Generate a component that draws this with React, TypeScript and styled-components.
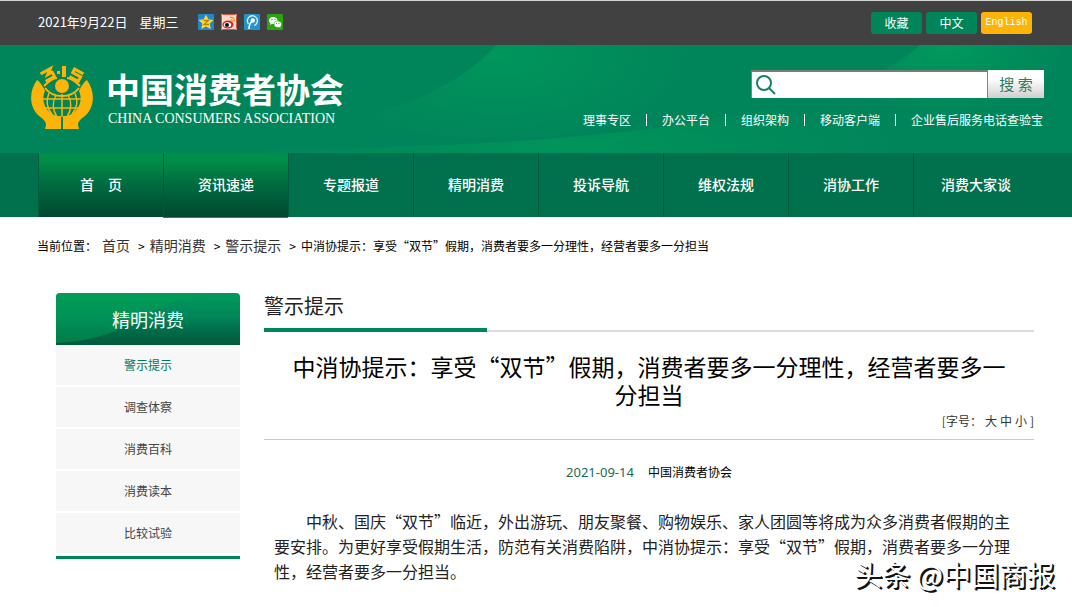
import React from "react";
import styled, { createGlobalStyle, css } from "styled-components";

const GlobalStyle = createGlobalStyle`
  *, *::before, *::after { box-sizing: border-box; }
  body {
    margin: 0;
    background: #fff;
    color: #000;
    font-family: "Noto Sans CJK SC", sans-serif;
    font-size: 12px;
  }
  a { color: inherit; text-decoration: none; }
  ul, ol, h1, h2, p { margin: 0; padding: 0; list-style: none; font-weight: 400; }
`;

const Page = styled.div`
  position: relative;
  overflow: hidden;
  padding-bottom: 20px;
`;

const TopBar = styled.div`
  display: flex;
  align-items: center;
  justify-content: space-between;
  height: 45px;
  padding: 0 40px 0 38px;
  background: #414141;
  border-top: 1px solid #d0d4d0;
  color: #fff;
`;

const DateLine = styled.div`
  display: flex;
  align-items: center;
  gap: 12px;
  padding-bottom: 2px;
  font-size: 13px;
  line-height: 20px;
`;

const Shares = styled.div`
  display: flex;
  gap: 7px;
  padding-left: 7px;
`;

const ShareLink = styled.a`
  display: block;
  height: 16px;
  svg { display: block; }
`;

const TopButtons = styled.div`
  display: flex;
  gap: 4px;
`;

const TopButton = styled.button<{ $accent?: boolean }>`
  width: 51px;
  height: 22px;
  padding: 0;
  border: 0;
  border-radius: 3px;
  background: ${(p) => (p.$accent ? "#fdb408" : "#00855a")};
  color: #fff;
  font-family: ${(p) =>
    p.$accent ? `"Liberation Mono", monospace` : `"Noto Sans CJK SC", sans-serif`};
  font-size: ${(p) => (p.$accent ? "10px" : "12px")};
  line-height: 20px;
`;

const Header = styled.header`
  position: relative;
  display: flex;
  justify-content: space-between;
  height: 108px;
  padding: 20px 28px 0 30px;
  background: #00855a;
`;

const HeaderArt = styled.svg`
  position: absolute;
  inset: 0;
  width: 100%;
  height: 100%;
`;

const Brand = styled.a`
  position: relative;
  display: flex;
  gap: 12px;
  color: #fff;
`;

const BrandText = styled.div`
  display: flex;
  flex-direction: column;
  gap: 3px;
  padding-top: 6px;
`;

const BrandName = styled.div`
  font-size: 34px;
  font-weight: 700;
  line-height: 36px;
`;

const BrandLatin = styled.div`
  padding-left: 2px;
  font-family: "Liberation Serif", serif;
  font-size: 14px;
  line-height: 18px;
`;

const HeaderSide = styled.div`
  position: relative;
  display: flex;
  flex-direction: column;
  align-items: flex-end;
  gap: 12px;
  padding-top: 5px;
`;

const SearchForm = styled.form`
  display: flex;
  width: 293px;
  height: 28px;
`;

const SearchField = styled.label`
  display: flex;
  flex: 1;
  align-items: center;
  padding-left: 3px;
  background: #fff;
  border: 1px solid #7b8680;
  border-top: 2px solid #7b7b7b;
  border-bottom: 0;
`;

const SearchInput = styled.input`
  flex: 1;
  min-width: 0;
  height: 100%;
  border: 0;
  outline: 0;
  background: transparent;
  font-size: 14px;
`;

const SearchButton = styled.button`
  width: 56px;
  padding: 0;
  border: 0;
  background: linear-gradient(#fff 30%, #cfcfcf);
  color: #2f7a5c;
  font-family: "Noto Sans CJK SC", sans-serif;
  font-size: 15px;
  line-height: 26px;
`;

const QuickLinks = styled.ul`
  display: flex;
  padding-right: 1px;
  font-size: 12px;
  line-height: 20px;
  color: #fff;
`;

const QuickItem = styled.li`
  display: flex;
  align-items: center;
  & + &::before {
    content: "";
    width: 1px;
    height: 12px;
    margin: 0 15px;
    background: #fff;
  }
`;

const Nav = styled.nav`
  padding: 0 34px 0 38px;
  background: #00704d;
`;

const NavList = styled.ul`
  display: grid;
  grid-template-columns: repeat(8, 1fr);
`;

const NavItem = styled.li<{ $lit?: boolean; $current?: boolean }>`
  height: 64px;
  border-left: 1px solid #005a3b;
  ${(p) =>
    p.$lit &&
    css`
      background: linear-gradient(#008f48 10%, #006f42 45%, #00482f);
    `}
  ${(p) =>
    p.$current &&
    css`
      box-shadow: 0 1px 0 #2f8560;
    `}
`;

const NavLink = styled.a`
  display: block;
  color: #fff;
  font-size: 14px;
  font-weight: 500;
  line-height: 63px;
  text-align: center;
  white-space: pre;
`;

const Crumbs = styled.ol`
  display: flex;
  flex-wrap: wrap;
  align-items: baseline;
  gap: 0 5px;
  padding: 17px 37px 0;
  line-height: 22px;
`;

const Crumb = styled.li<{ $link?: boolean }>`
  display: flex;
  align-items: baseline;
  gap: 5px;
  color: ${(p) => (p.$link ? "#333" : "#000")};
  font-size: ${(p) => (p.$link ? "14px" : "12px")};
`;

const Arrow = styled.span`
  padding-left: 3px;
  color: #000;
  font-size: 12px;
`;

const Columns = styled.div`
  display: flex;
  align-items: flex-start;
  gap: 24px;
  padding: 36px 38px 0 56px;
`;

const Sidebar = styled.aside`
  flex: none;
  width: 184px;
  border-bottom: 3px solid #00855a;
`;

const SideHead = styled.h2`
  position: relative;
  overflow: hidden;
  height: 52px;
  border-radius: 4px 4px 0 0;
  background: linear-gradient(#009a5a, #00865a 45%, #006a48 75%, #005a3c);
  color: #fff;
  font-size: 18px;
  line-height: 52px;
  text-align: center;
`;

const SideTitle = styled.span`
  position: relative;
`;

const SideList = styled.ul`
  padding-bottom: 1px;
`;

const SideLink = styled.a<{ $current?: boolean }>`
  display: block;
  height: 40px;
  margin-bottom: 2px;
  background: #f7f7f7;
  color: ${(p) => (p.$current ? "#007a54" : "#444")};
  font-size: 12px;
  line-height: 40px;
  text-align: center;
`;

const Main = styled.main`
  flex: 1;
  min-width: 0;
`;

const SectionHead = styled.div`
  height: 39px;
  border-bottom: 2px solid #dcdcdc;
`;

const SectionTitle = styled.h2`
  width: 223px;
  height: 39px;
  border-bottom: 4px solid #00855a;
  color: #222;
  font-size: 20px;
  line-height: 26px;
`;

const ArticleHead = styled.div`
  padding: 20px 0 7px;
  border-bottom: 1px solid #c9c9c9;
`;

const Title = styled.h1`
  padding: 0 20px 2px;
  font-size: 23px;
  line-height: 28px;
  text-align: center;
`;

const SizePicker = styled.div`
  display: flex;
  justify-content: flex-end;
  gap: 3px;
  color: #333;
  font-size: 12px;
  line-height: 22px;
`;

const SizeButton = styled.button`
  padding: 0;
  border: 0;
  background: none;
  color: inherit;
  font: inherit;
`;

const Meta = styled.div`
  display: flex;
  align-items: center;
  justify-content: center;
  gap: 14px;
  padding-top: 22px;
  line-height: 20px;
`;

const MetaDate = styled.time`
  color: #1b6b50;
  font-family: "Noto Sans", sans-serif;
  font-size: 13px;
`;

const Body = styled.p`
  padding: 27px 10px 0;
  color: #222;
  font-size: 16px;
  line-height: 25px;
  text-indent: 2em;
`;

const Watermark = styled.div`
  position: absolute;
  right: 17px;
  bottom: 12px;
  color: #fff;
  font-size: 28px;
  line-height: 36px;
  text-shadow: 1px 1px 0 #111, 2px 2px 0 #111;
`;

const nav = ["首　页", "资讯速递", "专题报道", "精明消费", "投诉导航", "维权法规", "消协工作", "消费大家谈"];
const quick = ["理事专区", "办公平台", "组织架构", "移动客户端", "企业售后服务电话查验宝"];
const crumbs = ["首页", "精明消费", "警示提示"];
const side = ["警示提示", "调查体察", "消费百科", "消费读本", "比较试验"];

const Emblem = () => (
  <svg width="64" height="65" viewBox="0 0 64 65" aria-hidden="true">
    <g fill="#fdb408">
      <path d="M7 15 C-1 26 -1 41 8 50 C13 54 16 56 16 60 L15 64 H31 V51 H27 C14 47 11 34 15 26 C13 21 10 17 7 15Z" />
      <path d="M57 15 C65 26 65 41 56 50 C51 54 48 56 48 60 L49 64 H33 V51 H37 C50 47 53 34 49 26 C51 21 54 17 57 15Z" />
      <circle cx="32" cy="21" r="7" />
    </g>
    <g fill="none" stroke="#fdb408">
      <path d="M14 21 Q22 13 27 13 M50 21 Q42 13 37 13" strokeWidth="2" />
      <path d="M15 23 Q21 31 32 31 Q43 31 49 23" strokeWidth="2" />
      <path d="M32 29V52 M13 34H51 M15 43H49 M26 30Q20 41 27 52 M38 30Q44 41 37 52 M19 28Q14 40 22 49 M45 28Q50 40 42 49" strokeWidth="1.500" />
    </g>
    <g fill="none" stroke="#fdb408" strokeWidth="3">
      <path transform="rotate(-28 18 10)" d="M12 5.500H23L18 9.500H23V14.500H13" />
      <path d="M34 1V12" strokeWidth="4" />
      <path transform="rotate(28 46 10)" d="M52 5.500H42V9.500H51V14.500H41" />
    </g>
    <rect x="27" y="6" width="3" height="3" fill="#fdb408" />
  </svg>
);

const QzoneIcon = () => (
  <svg width="16" height="16" viewBox="0 0 16 16">
    <rect width="16" height="16" rx="1" fill="#1f86d2" />
    <path d="M8 .5l2.300 4.800 5.200.7-3.800 3.600 1 5.300L8 12.400l-4.700 2.500 1-5.300L.5 6l5.200-.7z" fill="#ffdc32" />
    <path d="M5.500 6.500h5l-4.500 4h5" fill="none" stroke="#c77b00" strokeWidth="1.300" />
  </svg>
);

const WeiboIcon = () => (
  <svg width="16" height="16" viewBox="0 0 16 16">
    <rect width="16" height="16" rx="1" fill="#f8d9cc" />
    <rect x=".5" y=".5" width="15" height="15" rx="1" fill="none" stroke="#d8553f" />
    <ellipse cx="7" cy="10.500" rx="5.500" ry="4" fill="#d9232e" />
    <ellipse cx="6.500" cy="10.800" rx="3.700" ry="2.500" fill="#fff" />
    <circle cx="6" cy="11" r="2" fill="#111" />
    <path d="M9 3.500q4.500-.5 4.500 4M9.500 5.800q2 0 2 2" fill="none" stroke="#f0942c" strokeWidth="1.300" />
  </svg>
);

const TencentIcon = () => (
  <svg width="16" height="16" viewBox="0 0 16 16">
    <rect width="16" height="16" rx="1" fill="#2593c9" />
    <path d="M4.500 10A5 5 0 1 1 10 11.500" fill="none" stroke="#d8f1fc" strokeWidth="1.300" />
    <circle cx="8.800" cy="6.500" r="2.200" fill="#fff" />
    <path d="M8 7Q5 10 5 15" fill="none" stroke="#fff" strokeWidth="1.500" />
  </svg>
);

const WechatIcon = () => (
  <svg width="16" height="16" viewBox="0 0 16 16">
    <rect width="16" height="16" rx="1" fill="#2ba50f" />
    <path d="M2 6.500C2 1.800 10.500 1.800 10.500 6.500S6 10 5 9.800L3 11l.3-2Q2 8 2 6.500z" fill="#fff" />
    <path d="M14.500 10c0-4-7.500-4-7.500 0s4 3.500 5 3.200l2 1-.4-1.700Q14.500 11.500 14.500 10z" fill="#fff" stroke="#2ba50f" strokeWidth=".6" />
    <g fill="#2ba50f">
      <circle cx="5" cy="5.500" r=".7" /><circle cx="8" cy="5.500" r=".7" />
      <circle cx="9.500" cy="9.300" r=".6" /><circle cx="12" cy="9.300" r=".6" />
    </g>
  </svg>
);

const shares = [
  { name: "QQ空间", Icon: QzoneIcon },
  { name: "新浪微博", Icon: WeiboIcon },
  { name: "腾讯微博", Icon: TencentIcon },
  { name: "微信", Icon: WechatIcon },
];

const lowSweep = "M920 0 Q840 75 505 97 Q370 105 240 105 V108 H1072 V0Z";

export default function App() {
  return (
    <Page lang="zh-CN">
      <GlobalStyle />
      <TopBar>
        <DateLine>
          <span>2021年9月22日</span>
          <span>星期三</span>
          <Shares>
            {shares.map(({ name, Icon }) => (
              <ShareLink key={name} href="#" aria-label={name}><Icon /></ShareLink>
            ))}
          </Shares>
        </DateLine>
        <TopButtons>
          <TopButton type="button">收藏</TopButton>
          <TopButton type="button">中文</TopButton>
          <TopButton type="button" $accent>English</TopButton>
        </TopButtons>
      </TopBar>

      <Header>
        <HeaderArt viewBox="0 0 1072 108" preserveAspectRatio="none" aria-hidden="true">
          <defs>
            <radialGradient id="sweepA" gradientUnits="userSpaceOnUse" cx="0" cy="0" r="1" gradientTransform="translate(500 10) scale(190 90)">
              <stop offset="0" stopColor="#00985c" stopOpacity=".9" />
              <stop offset="1" stopColor="#00985c" stopOpacity="0" />
            </radialGradient>
            <radialGradient id="sweepB" gradientUnits="userSpaceOnUse" cx="0" cy="0" r="1" gradientTransform="translate(945 0) scale(120 70)">
              <stop offset="0" stopColor="#009a5c" />
              <stop offset="1" stopColor="#009a5c" stopOpacity="0" />
            </radialGradient>
            <radialGradient id="sweepC" gradientUnits="userSpaceOnUse" cx="0" cy="0" r="1" gradientTransform="translate(570 100) scale(330 50)">
              <stop offset="0" stopColor="#00965b" stopOpacity=".9" />
              <stop offset="1" stopColor="#00965b" stopOpacity="0" />
            </radialGradient>
          </defs>
          <path d="M496 0 Q430 75 240 93 H720 V0Z" fill="url(#sweepA)" />
          <path d={lowSweep} fill="url(#sweepB)" />
          <path d={lowSweep} fill="url(#sweepC)" />
        </HeaderArt>
        <Brand href="#">
          <Emblem />
          <BrandText>
            <BrandName>中国消费者协会</BrandName>
            <BrandLatin>CHINA CONSUMERS ASSOCIATION</BrandLatin>
          </BrandText>
        </Brand>
        <HeaderSide>
          <SearchForm>
            <SearchField>
              <svg width="22" height="22" viewBox="0 0 22 22" fill="none" stroke="#1b8060" strokeWidth="2" aria-hidden="true">
                <circle cx="9" cy="9" r="7" />
                <path d="M14 14l6 6" />
              </svg>
              <SearchInput type="search" aria-label="搜索内容" />
            </SearchField>
            <SearchButton type="button">搜 索</SearchButton>
          </SearchForm>
          <QuickLinks>
            {quick.map((q) => (
              <QuickItem key={q}><a href="#">{q}</a></QuickItem>
            ))}
          </QuickLinks>
        </HeaderSide>
      </Header>

      <Nav>
        <NavList>
          {nav.map((n, i) => (
            <NavItem key={n} $lit={i < 2} $current={i === 1}><NavLink href="#">{n}</NavLink></NavItem>
          ))}
        </NavList>
      </Nav>

      <Crumbs>
        <Crumb>当前位置：</Crumb>
        {crumbs.map((c) => (
          <Crumb key={c} $link>
            <a href="#">{c}</a>
            <Arrow>&gt;</Arrow>
          </Crumb>
        ))}
        <Crumb>中消协提示：享受“双节”假期，消费者要多一分理性，经营者要多一分担当</Crumb>
      </Crumbs>

      <Columns>
        <Sidebar>
          <SideHead>
            <HeaderArt viewBox="0 0 184 52" preserveAspectRatio="none" aria-hidden="true">
              <path d="M0 50 Q45 48 75 30 Q105 10 150 0 H0Z" fill="#00a054" opacity=".5" />
            </HeaderArt>
            <SideTitle>精明消费</SideTitle>
          </SideHead>
          <SideList>
            {side.map((s, i) => (
              <li key={s}><SideLink href="#" $current={i === 0}>{s}</SideLink></li>
            ))}
          </SideList>
        </Sidebar>
        <Main>
          <SectionHead>
            <SectionTitle>警示提示</SectionTitle>
          </SectionHead>
          <ArticleHead>
            <Title>中消协提示：享受“双节”假期，消费者要多一分理性，经营者要多一分担当</Title>
            <SizePicker>
              <span>[字号：</span>
              <SizeButton type="button">大</SizeButton>
              <SizeButton type="button">中</SizeButton>
              <SizeButton type="button">小</SizeButton>
              <span>]</span>
            </SizePicker>
          </ArticleHead>
          <Meta>
            <MetaDate dateTime="2021-09-14">2021-09-14</MetaDate>
            <span>中国消费者协会</span>
          </Meta>
          <Body>
            中秋、国庆“双节”临近，外出游玩、朋友聚餐、购物娱乐、家人团圆等将成为众多消费者假期的主要安排。为更好享受假期生活，防范有关消费陷阱，中消协提示：享受“双节”假期，消费者要多一分理性，经营者要多一分担当。
          </Body>
        </Main>
      </Columns>
      <Watermark>头条 @中国商报</Watermark>
    </Page>
  );
}
